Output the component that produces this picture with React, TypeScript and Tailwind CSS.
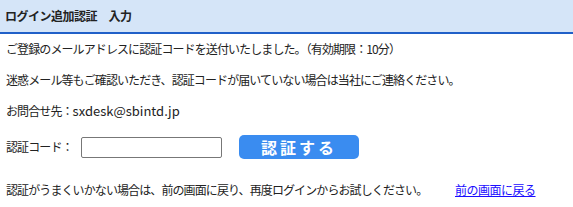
const font = { fontFamily: '"MS PGothic", "Noto Sans CJK JP", "Liberation Sans", sans-serif' };

export default function App() {
  return (
    <div className="w-[573px] h-[207px] bg-white text-[12px] tracking-[-0.9px] text-[#222]" style={font}>
      {/* header */}
      <div className="h-[34px] bg-[#d5e5f8] border-b-2 border-[#2060c8] flex items-center pl-[5px]">
        <h1 className="text-[12px] font-bold text-[#222] tracking-[-0.5px]">ログイン追加認証　入力</h1>
      </div>

      <div className="pl-[6px] pt-[6px]">
        <p className="h-[31px] leading-[18px]">
          ご登録のメールアドレスに認証コードを送付いたしました。（有効期限：10分）
        </p>
        <p className="h-[31px] leading-[18px]">
          迷惑メール等もご確認いただき、認証コードが届いていない場合は当社にご連絡ください。
        </p>
        <p className="h-[31px] leading-[18px]">
          お問合せ先：<span className="text-[13px] tracking-normal">sxdesk@sbintd.jp</span>
        </p>

        <div className="flex items-center mt-[2px] h-[24px]">
          <span className="w-[75px]">認証コード：</span>
          <input className="w-[141px] h-[21px] border border-[#777] rounded-[2px] px-1 outline-none" />
          <button className="ml-[17px] w-[120px] h-[24px] rounded-[5px] bg-[#3a8cf0] text-white font-bold text-[16px] tracking-[3px]">
            認証する
          </button>
        </div>

        <div className="flex mt-[22px] leading-[18px] whitespace-nowrap">
          <span className="w-[449px]">認証がうまくいかない場合は、前の画面に戻り、再度ログインからお試しください。</span>
          <a href="#" className="text-[#1a0dff] underline tracking-[-0.5px]">前の画面に戻る</a>
        </div>
      </div>
    </div>
  );
}
